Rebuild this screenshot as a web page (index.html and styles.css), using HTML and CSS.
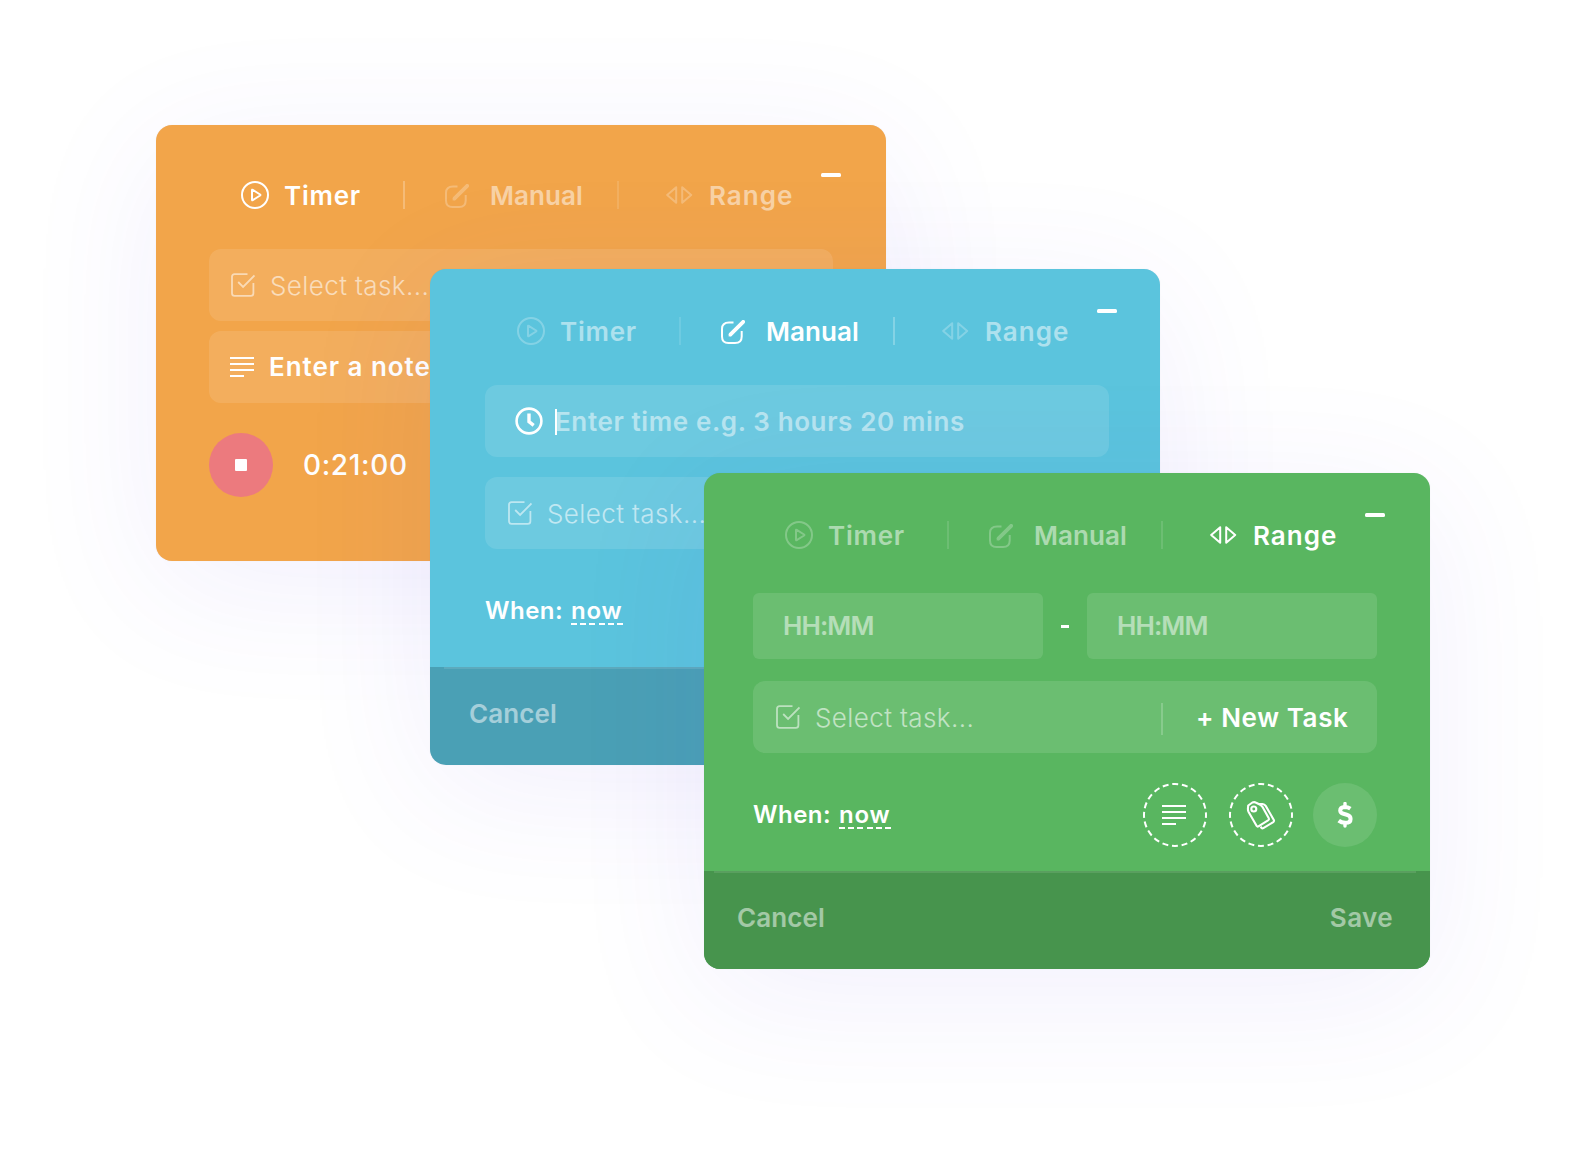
FILE: index.html
```html
<!DOCTYPE html>
<html lang="en">
<head>
<meta charset="utf-8">
<title>Time entry</title>
<link rel="stylesheet" href="styles.css">
</head>
<body>
<svg class="sprite" aria-hidden="true">
  <symbol id="play" viewBox="0 0 28 28"><circle cx="14" cy="14" r="13" fill="none" stroke="currentColor" stroke-width="2"/><path d="M11 9.2v9.6q0 .8.7.4l7.4-4.7q.6-.5 0-1l-7.4-4.7q-.7-.4-.7.4z" fill="none" stroke="currentColor" stroke-width="2" stroke-linejoin="round"/></symbol>
  <symbol id="edit" viewBox="0 0 24 24"><path d="M12.500 2.500H8Q1 2.500 1 9v7.500q0 6.500 6.500 6.500H14q6.700 0 6.700-6.500V11" fill="none" stroke="currentColor" stroke-width="2"/><path d="M9.600 14.400L22.200 1.800" fill="none" stroke="currentColor" stroke-width="3.800" stroke-linecap="round"/><path d="M7.600 16.400l.5-3.400 3 3z" fill="currentColor"/></symbol>
  <symbol id="range" viewBox="0 0 27 18"><path d="M10.200 1.200v15.600L1.200 9zM16.200 1.200v15.600L25.200 9z" fill="none" stroke="currentColor" stroke-width="2" stroke-linejoin="round"/></symbol>
  <symbol id="check" viewBox="0 0 24 24"><path d="M16.500 1.200H3.600Q1 1.200 1 3.800v16.400q0 2.600 2.600 2.600h16.200q2.600 0 2.600-2.600V10" fill="none" stroke="currentColor" stroke-width="1.800"/><path d="M7.200 9l4.900 5L23.500 2.400" fill="none" stroke="currentColor" stroke-width="1.800"/></symbol>
  <symbol id="lines" viewBox="0 0 24 20"><path d="M0 1h24M0 7h24M0 13h24M0 19h14" fill="none" stroke="currentColor" stroke-width="2"/></symbol>
  <symbol id="clock" viewBox="0 0 28 28"><circle cx="14" cy="14" r="12.400" fill="none" stroke="currentColor" stroke-width="2.600"/><path d="M14 6.500v8.200l4.700 3.600" fill="none" stroke="currentColor" stroke-width="3.400"/></symbol>
  <symbol id="tags" viewBox="0 0 64 64"><g fill="none" stroke="currentColor" stroke-width="2.100" stroke-linejoin="round"><path d="M19.200 22.500l4.200-3q1.800-.8 3.200 0l4.600 2.300q1.400.8 2.200 2l6.400 11.500q.6 1.200-.4 1.900l-10 6.200q-1 .6-1.700-.4L19.600 29q-.8-1.500-.7-3.200z"/><circle cx="24.800" cy="26" r="2.500"/><path d="M29.500 21h4q2 .2 3.200 1.900l8 13.800q.8 1.500-.4 2.400l-10 6q-1 .6-1.800-.2l-.9-1.300"/></g></symbol>
  <symbol id="dollar" viewBox="0 0 16 26"><path d="M13.400 6.700Q10.800 4.900 7.600 4.900 3.200 5 3.200 8.400q0 2.500 3.300 3.400l3.300.9q3.800 1 3.800 4.200 0 3.900-5.200 3.900-4 0-6.700-2.200" fill="none" stroke="currentColor" stroke-width="4"/><path d="M8 1.500v3M8 21v3" stroke="currentColor" stroke-width="3.400" stroke-linecap="round"/></symbol>
  <symbol id="ring" viewBox="0 0 64 64"><circle cx="32" cy="32" r="31" fill="none" stroke="currentColor" stroke-width="2" stroke-dasharray="6 3.738" stroke-dashoffset="3"/></symbol>
</svg>

<section class="card card-timer">
  <div class="content">
    <nav class="tabs">
      <div class="tab tab-a active"><svg class="i-play"><use href="#play"/></svg><span class="t-timer">Timer</span></div>
      <div class="tab tab-b lead"><svg class="i-edit"><use href="#edit"/></svg><span class="t-manual">Manual</span></div>
      <div class="tab tab-c"><svg class="i-range"><use href="#range"/></svg><span class="t-range">Range</span></div>
      <i class="minimize"></i>
    </nav>
    <div class="field"><svg class="i-check"><use href="#check"/></svg><span class="select">Select task...</span></div>
    <div class="field field-note"><svg class="i-lines"><use href="#lines"/></svg><span class="note">Enter a note</span></div>
    <div class="running"><div class="stop"><i></i></div><span class="elapsed">0:21:00</span></div>
  </div>
</section>

<section class="card card-manual">
  <div class="content">
    <nav class="tabs">
      <div class="tab tab-a"><svg class="i-play"><use href="#play"/></svg><span class="t-timer">Timer</span></div>
      <div class="tab tab-b active"><svg class="i-edit"><use href="#edit"/></svg><span class="t-manual">Manual</span></div>
      <div class="tab tab-c lead"><svg class="i-range"><use href="#range"/></svg><span class="t-range">Range</span></div>
      <i class="minimize"></i>
    </nav>
    <div class="field field-time"><svg class="i-clock"><use href="#clock"/></svg><i class="caret"></i><span class="time-hint">Enter time e.g. 3 hours 20 mins</span></div>
    <div class="field"><svg class="i-check"><use href="#check"/></svg><span class="select">Select task...</span></div>
    <div class="meta"><div class="when"><span class="when-label">When:</span><span class="now">now</span></div></div>
  </div>
  <footer class="foot"><span class="cancel">Cancel</span></footer>
</section>

<section class="card card-range">
  <div class="content">
    <nav class="tabs">
      <div class="tab tab-a"><svg class="i-play"><use href="#play"/></svg><span class="t-timer">Timer</span></div>
      <div class="tab tab-b"><svg class="i-edit"><use href="#edit"/></svg><span class="t-manual">Manual</span></div>
      <div class="tab tab-c active"><svg class="i-range"><use href="#range"/></svg><span class="t-range">Range</span></div>
      <i class="minimize"></i>
    </nav>
    <div class="span-row"><div class="hhmm"><span>HH:MM</span></div><i class="dash"></i><div class="hhmm"><span>HH:MM</span></div></div>
    <div class="field"><svg class="i-check"><use href="#check"/></svg><span class="select">Select task...</span><div class="new-task"><span>+ New Task</span></div></div>
    <div class="meta">
      <div class="when"><span class="when-label">When:</span><span class="now">now</span></div>
      <div class="actions">
        <div class="round"><svg class="ring"><use href="#ring"/></svg><svg class="i-lines"><use href="#lines"/></svg></div>
        <div class="round"><svg class="ring"><use href="#ring"/></svg><svg class="i-tags"><use href="#tags"/></svg></div>
        <div class="round filled"><svg class="i-dollar"><use href="#dollar"/></svg></div>
      </div>
    </div>
  </div>
  <footer class="foot"><span class="cancel">Cancel</span><span class="save">Save</span></footer>
</section>
</body>
</html>
```

FILE: styles.css
```css
* { box-sizing: border-box; }
body {
  margin: 0;
  position: relative;
  width: 1586px;
  height: 1157px;
  overflow: hidden;
  background: #fff;
  color: #fff;
  font: 580 26px/28px Inter, "Liberation Sans", sans-serif;
  white-space: nowrap;
}
.sprite { position: absolute; width: 0; height: 0; }
svg { display: block; flex: none; }
span { display: block; }

/* Overlapping windows */
.card {
  position: absolute;
  display: flex;
  flex-direction: column;
  border-radius: 16px;
  box-shadow: 0 26px 140px rgba(90, 70, 230, .08), 0 0 1px rgba(90, 90, 130, .15);
}
.card-timer { left: 156px; top: 125px; width: 730px; height: 436px; background: #f2a54a; padding: 56px 0 0 53px; }
.card-manual { left: 430px; top: 269px; width: 730px; height: 496px; background: #5bc4dd; }
.card-range { left: 704px; top: 473px; width: 726px; height: 496px; background: #59b660; }
.card-manual .content { padding: 48px 0 0 55px; height: 398px; }
.card-range .content { padding: 48px 0 0 49px; height: 398px; }
.content > div { width: 624px; }

/* Mode tabs */
.tabs { display: flex; width: 632px; height: 28px; padding-left: 32px; }
.tab { display: flex; align-items: center; height: 28px; }
.tab span, .field span { padding-top: 2px; }
.tab svg { opacity: .25; }
.tab span { opacity: .5; }
.tab.active svg, .tab.active span { opacity: 1; }
.tab-a { width: 162px; }
.tab-b, .tab-c { border-left: 2px solid rgba(255, 255, 255, .12); }
.tab-b { width: 214px; padding-left: 40px; }
.tab-c { width: 204px; padding-left: 47px; }
.tab.lead { border-left-color: rgba(255, 255, 255, .25); }
.i-play { width: 28px; height: 28px; margin-right: 15px; }
.i-edit { width: 24px; height: 24px; margin: 2px 21px 0 0; }
.i-range { width: 27px; height: 18px; margin: 0 16px 0 0; }
.t-timer { letter-spacing: .75px; }
.t-manual { letter-spacing: .05px; }
.t-range { letter-spacing: 1px; }
.minimize { flex: none; width: 20px; height: 4px; border-radius: 1.5px; background: #fff; margin: -8px 0 0; }

/* Input rows */
.field {
  display: flex;
  align-items: center;
  height: 72px;
  border-radius: 12px;
  background: rgba(255, 255, 255, .11);
  padding-left: 22px;
}
.card-timer .field { margin-top: 40px; }
.card-timer .field-note { margin-top: 10px; padding: 0 0 0 21px; }
.i-check { width: 24px; height: 24px; opacity: .55; margin-top: -1px; }
.i-lines { width: 24px; height: 20px; }
.select { margin-left: 15px; font-weight: 340; letter-spacing: .4px; opacity: .58; }
.card-manual .field { padding-left: 23px; margin-top: 20px; }
.card-manual .field-time { padding-left: 30px; margin-top: 40px; }
.card-range .field { padding-left: 23px; margin-top: 22px; }
.note { margin: -3px 0 0 15px; letter-spacing: .95px; }
.i-clock { width: 28px; height: 28px; }
.caret { width: 2px; height: 26px; margin: 2px 0 0 12px; background: #fff; }
.time-hint { letter-spacing: .62px; opacity: .5; margin-left: -2px; }
.running { display: flex; align-items: center; margin-top: 30px; height: 64px; }
.stop { display: flex; align-items: center; justify-content: center; width: 64px; height: 64px; border-radius: 50%; background: #ec7a7e; }
.stop i { width: 12px; height: 12px; border-radius: 1px; background: #fff; }
.elapsed { margin-left: 30px; font-size: 28px; font-weight: 550; letter-spacing: .65px; }

.span-row { display: flex; align-items: center; margin-top: 44px; }
.hhmm { width: 290px; height: 66px; border-radius: 6px; background: rgba(255, 255, 255, .11); padding: 19px 0 0 30px; }
.hhmm span { opacity: .5; letter-spacing: -.9px; }
.dash { width: 8px; height: 3px; margin: 0 18px; background: #fff; }
.new-task { display: flex; align-items: center; height: 32px; margin: 3px 0 0 auto; width: 216px; padding-left: 33px; border-left: 2px solid rgba(255, 255, 255, .2); }
.field .new-task span { letter-spacing: .6px; padding: 0 0 1px; }

/* Date line and actions */
.meta { display: flex; justify-content: space-between; align-items: center; height: 64px; margin-top: 30px; }
.when { display: flex; font-size: 24px; }
.when-label { width: 86px; letter-spacing: .5px; }
.now {
  width: 52px;
  height: 28px;
  letter-spacing: .8px;
  background: repeating-linear-gradient(90deg, #fff 0 6px, transparent 6px 9.200px) 0 100% / 100% 2px no-repeat;
}
.actions { display: flex; align-items: center; }
.round { position: relative; display: flex; align-items: center; justify-content: center; width: 64px; height: 64px; margin-left: 22px; border-radius: 50%; }
.round.filled { margin-left: 20px; background: rgba(255, 255, 255, .11); }
.round .i-lines { margin-right: 2px; }
.ring { position: absolute; inset: 0; width: 64px; height: 64px; }
.i-tags { width: 64px; height: 64px; }
.i-dollar { width: 16px; height: 26px; }

/* Footer */
.foot {
  display: flex;
  justify-content: space-between;
  height: 98px;
  border-radius: 0 0 16px 16px;
  padding-top: 33px;
  background: linear-gradient(rgba(255, 255, 255, .1), rgba(255, 255, 255, .1)) 14px 0 / 702px 2px no-repeat rgba(0, 0, 0, .18);
}
.card-range .foot { background-position: 10px 0; background-color: #47944d; }
.foot span { opacity: .5; }
.cancel { margin-left: 39px; letter-spacing: .1px; }
.card-range .cancel { margin-left: 33px; }
.save { margin-right: 37px; letter-spacing: .4px; }
```
